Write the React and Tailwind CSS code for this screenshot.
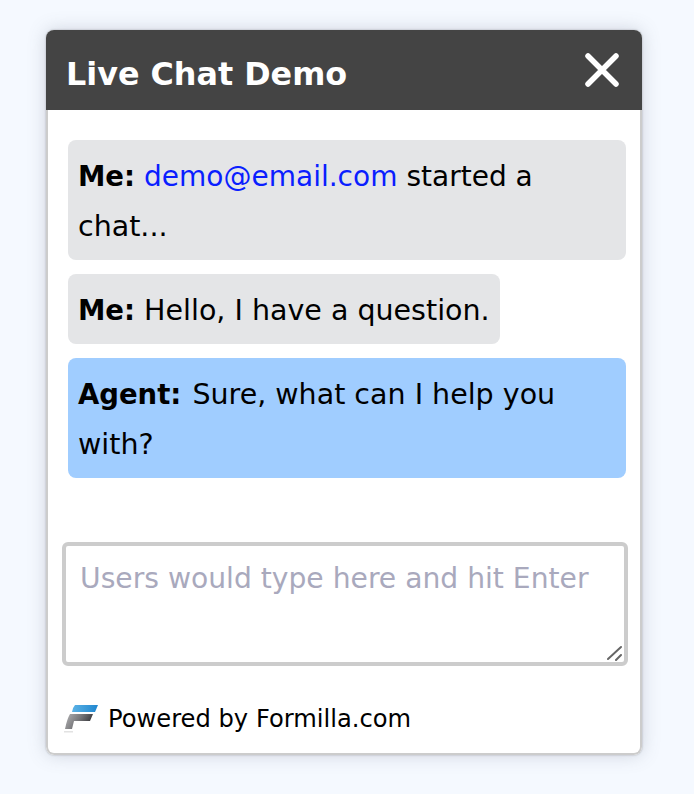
import React from "react";

function Logo() {
    return (
        <svg width="36" height="30" viewBox="0 0 36 30" className="shrink-0">
            <defs>
                <linearGradient id="blueBar" x1="0" y1="0" x2="1" y2="0">
                    <stop offset="0" stopColor="#5cb3e6" />
                    <stop offset="1" stopColor="#1f86cf" />
                </linearGradient>
                <linearGradient id="greyBar" x1="0" y1="0" x2="1" y2="0.35">
                    <stop offset="0" stopColor="#b4b4b6" />
                    <stop offset="0.55" stopColor="#77777a" />
                    <stop offset="1" stopColor="#38383b" />
                </linearGradient>
            </defs>
            <path d="M12 1 H35 L32 8 H9 Q10 3 12 1 Z" fill="url(#blueBar)" />
            <path d="M7 10 H30 L27 17 H11 L9 25 H2 Q4 15 7 10 Z" fill="url(#greyBar)" />
            <rect x="1" y="27" width="9" height="1.5" fill="#e2e2e2" />
        </svg>
    );
}

function Bubble({ who, blue, wide, children }) {
    return (
        <div className={`rounded-lg px-2.5 pb-2 pt-3 text-black ${blue ? "bg-[#a0cdff]" : "bg-[#e4e5e7]"} ${wide ? "" : "self-start"}`}>
            <b className={`text-[27.5px] leading-none ${blue ? "mr-0.5" : ""}`}>{who}:</b> {children}
        </div>
    );
}

export default function App() {
    return (
        <div className="min-h-[794px] bg-[#f5f9ff] px-[46px] pt-[30px] font-['DejaVu_Sans',sans-serif]">
            <div className="flex h-[725px] w-[596px] flex-col overflow-hidden rounded-lg bg-white shadow-[0_0_2px_rgba(0,0,0,0.3),0_0_18px_rgba(90,100,120,0.25)]">
                <div className="flex h-20 shrink-0 items-center justify-between bg-[#444444] pl-5 pr-[22px]">
                    <h1 className="pt-2 text-[31.8px] font-bold text-white">Live Chat Demo</h1>
                    <svg width="36" height="36" viewBox="0 0 36 36" fill="none" stroke="white" strokeWidth="5.5" strokeLinecap="round">
                        <path d="M4 4 L32 32 M32 4 L4 32" />
                    </svg>
                </div>
                <div className="flex flex-1 flex-col rounded-b-lg border-x-2 border-b-2 border-[#cccccc]">
                    <div className="flex flex-col gap-3.5 pl-5 pr-3.5 pt-[30px] text-[28.5px] leading-[50px]">
                        <Bubble who="Me" wide>
                            <span className="text-[28px] leading-none text-[#0a1eff]">demo@email.com</span> <span className="text-[28px] leading-none">started a</span> chat...
                        </Bubble>
                        <Bubble who="Me">Hello, I have a question.</Bubble>
                        <Bubble who="Agent" blue wide>Sure, what can I help you with?</Bubble>
                    </div>
                    <div className="pl-3.5 pr-3 pt-[64px]">
                        <div className="relative">
                            <textarea
                                className="block h-[124px] w-full resize-none rounded-md border-4 border-[#cccccc] px-3.5 py-4 text-[28.2px] leading-[34px] placeholder:text-[#a9a9bd]"
                                placeholder="Users would type here and hit Enter"
                            />
                            <svg width="16" height="16" viewBox="0 0 16 16" className="absolute bottom-[5px] right-[5px]" stroke="#666666" strokeWidth="2" strokeLinecap="round">
                                <path d="M1 14 L14 2 M9 15 L14 10" />
                            </svg>
                        </div>
                    </div>
                    <div className="flex items-center gap-[9px] pl-[15px] pt-[37px] text-[24.2px] leading-8 text-black">
                        <Logo />
                        <span>Powered by Formilla.com</span>
                    </div>
                </div>
            </div>
        </div>
    );
}
